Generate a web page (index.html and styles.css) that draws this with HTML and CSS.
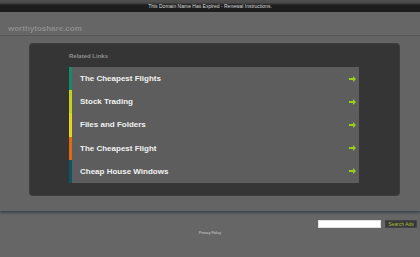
FILE: index.html
```html
<!DOCTYPE html>
<html>
<head>
<meta charset="utf-8">
<link rel="stylesheet" href="styles.css">
</head>
<body>
<div class="topbar">This Domain Name Has Expired - Renewal Instructions.</div>
<div class="header">worthytoshare.com</div>
<div class="content">
  <div class="panel">
    <div class="related">Related Links</div>
    <ul class="links">
      <li class="item c1"><span>The Cheapest Flights</span><svg class="arrow" width="7" height="6" viewBox="0 0 7 6"><path d="M0 2h4V0l3 3-3 3V4H0z"/></svg></li>
      <li class="item c2"><span>Stock Trading</span><svg class="arrow" width="7" height="6" viewBox="0 0 7 6"><path d="M0 2h4V0l3 3-3 3V4H0z"/></svg></li>
      <li class="item c3"><span>Files and Folders</span><svg class="arrow" width="7" height="6" viewBox="0 0 7 6"><path d="M0 2h4V0l3 3-3 3V4H0z"/></svg></li>
      <li class="item c4"><span>The Cheapest Flight</span><svg class="arrow" width="7" height="6" viewBox="0 0 7 6"><path d="M0 2h4V0l3 3-3 3V4H0z"/></svg></li>
      <li class="item c5"><span>Cheap House Windows</span><svg class="arrow" width="7" height="6" viewBox="0 0 7 6"><path d="M0 2h4V0l3 3-3 3V4H0z"/></svg></li>
    </ul>
  </div>
</div>
<div class="search">
  <input class="search-input" type="text">
  <button class="search-btn">Search Ads</button>
</div>
<div class="footer">Privacy Policy</div>
</body>
</html>
```
FILE: styles.css
```css
html, body {
  margin: 0;
  padding: 0;
}
body {
  background: #666666;
  font-family: "Liberation Sans", Arial, sans-serif;
  width: 420px;
  height: 257px;
  overflow: hidden;
}
.topbar {
  height: 12px;
  line-height: 13px;
  text-align: center;
  font-size: 5px;
  color: #dcdcdc;
  background: linear-gradient(to bottom, #505050 0, #484848 3px, #1e1e1e 5px, #1c1c1c 100%);
}
.header {
  height: 24px;
  box-sizing: border-box;
  padding: 11px 0 0 8px;
  line-height: 11px;
  font-size: 8px;
  font-weight: bold;
  color: #8c8c8c;
  border-bottom: 1px solid #575757;
}
.content {
  background: #646464;
  padding: 8px 21px 16px 30px;
  box-shadow: 0 2px 2px rgba(40, 60, 70, 0.7);
  position: relative;
}
.panel {
  background: #353535;
  border-radius: 3px;
  padding: 8px 40px 12px 39px;
  box-shadow: 0 0 0 1px #3d3d3d;
}
.related {
  font-size: 6px;
  font-weight: bold;
  color: #8f8f8f;
  line-height: 8px;
  margin-bottom: 7px;
}
.links {
  list-style: none;
  margin: 0;
  padding: 0;
}
.item {
  height: 23.2px;
  background: #5d5d5d;
  border-left: 3px solid #1a8a6a;
  display: flex;
  align-items: center;
  justify-content: space-between;
  padding: 0 3px 0 8px;
  font-size: 8px;
  font-weight: bold;
  color: #f2f2f2;
}
.item.c1 { border-left-color: #178a6c; }
.item.c2 { border-left-color: #c4d21a; }
.item.c3 { border-left-color: #e8d41a; }
.item.c4 { border-left-color: #e06a10; }
.item.c5 { border-left-color: #0c5468; }
.arrow {
  fill: #9ccc1c;
}
.search {
  display: flex;
  justify-content: flex-end;
  align-items: center;
  gap: 4px;
  padding: 9px 3px 0 0;
}
.search-input {
  width: 63px;
  height: 8px;
  box-sizing: border-box;
  border: 1px solid #e0e0e0;
  background: #ffffff;
  padding: 0;
  margin: 0;
}
.search-btn {
  height: 8px;
  width: 32px;
  box-sizing: border-box;
  padding: 0;
  margin: 0;
  border: 1px solid #444;
  background: #383838;
  color: #a9b83a;
  font-family: "Liberation Sans", Arial, sans-serif;
  font-size: 5px;
  line-height: 6px;
}
.footer {
  text-align: center;
  font-size: 3.5px;
  color: #d8d8d8;
  margin-top: 2px;
  line-height: 6px;
}
```
